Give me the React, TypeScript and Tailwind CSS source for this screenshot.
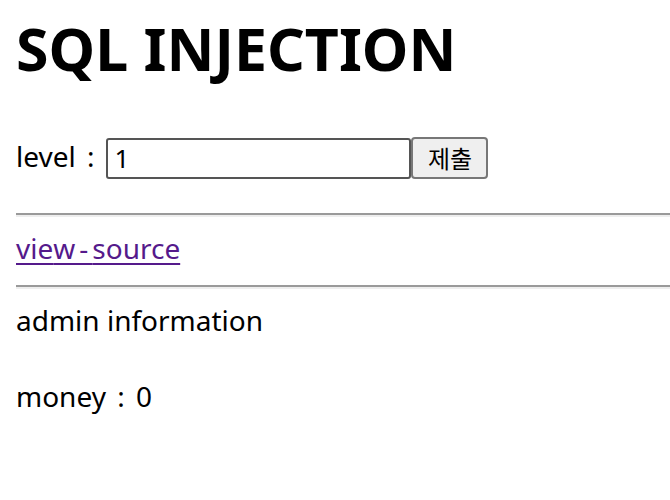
export default function App() {
  return (
    <div className="min-h-[500px] bg-white pl-4 text-black font-['Noto_Sans','Noto_Sans_CJK_KR',sans-serif]">
      <h1 className="pt-[5px] text-[59px] font-bold leading-[86px]">SQL INJECTION</h1>
      <form className="mt-[46px] flex items-center" onSubmit={(e) => e.preventDefault()}>
        <label className="text-[28px] leading-[40px] mr-[12px] -mt-[4px] [word-spacing:4px]">level :</label>
        <input
          defaultValue="1"
          className="h-[41px] w-[305px] rounded-[3px] border-2 border-[#555] px-[6px] text-[26px] outline-none"
        />
        <button className="h-[42px] w-[77px] rounded-[4px] border-2 border-[#777] bg-[#efefef] text-[24px] font-['Noto_Sans_CJK_KR',sans-serif]">
          제출
        </button>
      </form>
      <hr className="mt-[34px] border-t-2 border-b-2 border-t-[#9a9a9a] border-b-[#eee]" />
      <div className="pt-[11px] pb-[17px] text-[28px] leading-[40px]">
        <a href="#" className="text-[#551a8b] underline underline-offset-4 decoration-2">
          vie<span className="tracking-[4px]">w-</span>source
        </a>
      </div>
      <hr className="border-t-2 border-b-2 border-t-[#9a9a9a] border-b-[#eee]" />
      <p className="mt-[11px] text-[28px] leading-[40px]">admin information</p>
      <p className="mt-[36px] text-[28px] leading-[40px] [word-spacing:4px]">money : 0</p>
    </div>
  );
}
